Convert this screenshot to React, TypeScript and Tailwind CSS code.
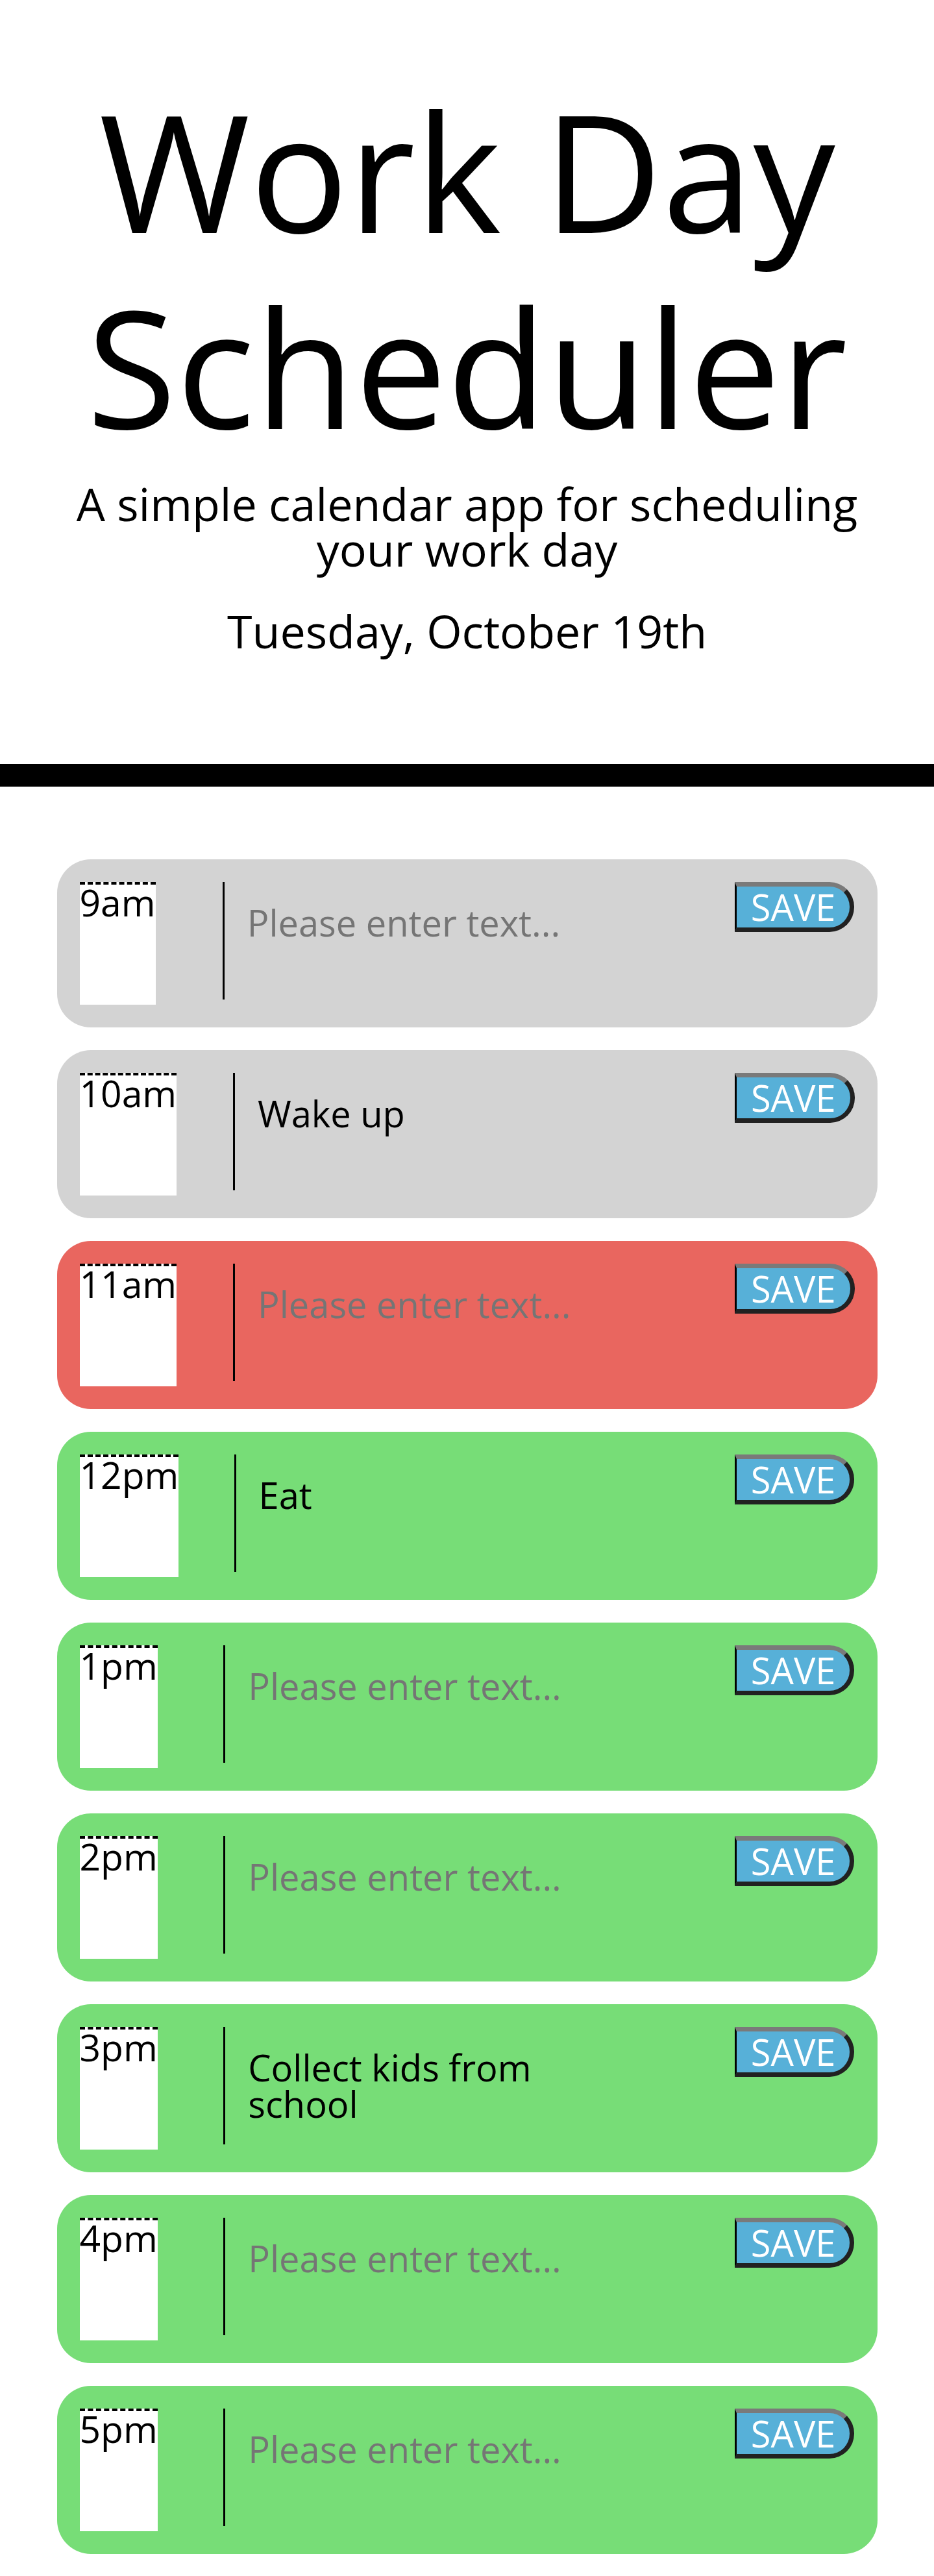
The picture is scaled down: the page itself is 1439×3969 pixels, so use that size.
import React from "react";

type Row = { hour: string; bg: string; value: string };

const rows: Row[] = [
  { hour: "9am", bg: "bg-[#d3d3d3]", value: "" },
  { hour: "10am", bg: "bg-[#d3d3d3]", value: "Wake up" },
  { hour: "11am", bg: "bg-[#e9665f]", value: "" },
  { hour: "12pm", bg: "bg-[#77dd77]", value: "Eat" },
  { hour: "1pm", bg: "bg-[#77dd77]", value: "" },
  { hour: "2pm", bg: "bg-[#77dd77]", value: "" },
  { hour: "3pm", bg: "bg-[#77dd77]", value: "Collect kids from school" },
  { hour: "4pm", bg: "bg-[#77dd77]", value: "" },
  { hour: "5pm", bg: "bg-[#77dd77]", value: "" },
];

function TimeRow({ row }: { row: Row }) {
  return (
    <div
      className={`w-[1264px] rounded-[52px] p-[35px] flex justify-between items-start ${row.bg}`}
    >
      <div className="h-[189px] bg-white border-t-[4px] border-dashed border-black text-[57px] leading-[0.98] text-black">
        {row.hour}
      </div>
      <textarea
        className="w-[686px] h-[181px] border-l-[3px] border-solid border-black bg-transparent pt-[34px] pb-[36px] pl-[35px] pr-[36px] text-[56px] leading-none text-black resize-none overflow-hidden outline-none placeholder:text-[#757575]"
        placeholder="Please enter text..."
        defaultValue={row.value}
      />
      <button className="h-[77px] px-[22px] bg-[#57b0d8] text-white text-[56px] leading-none border-solid border-l-[3px] border-l-black border-t-[7px] border-t-[#7a7a7a] border-r-[7px] border-r-[#212121] border-b-[7px] border-b-[#212121] rounded-r-[38px]">
        SAVE
      </button>
    </div>
  );
}

export default function App() {
  return (
    <div className="font-['Open_Sans',sans-serif] bg-white text-black w-full">
      <header className="pt-[111px] text-center">
        <h1 className="text-[252px] leading-[1.2] font-normal">Work Day Scheduler</h1>
        <p className="mt-[25px] mx-auto max-w-[1300px] text-[70px] leading-none">
          A simple calendar app for scheduling your work day
        </p>
        <p className="mt-[56px] text-[70px] leading-none">Tuesday, October 19th</p>
      </header>
      <div className="mt-[170px] h-[35px] bg-black w-full" />
      <main className="pt-[112px] pb-[35px] flex flex-col items-center gap-[35px]">
        {rows.map((r) => (
          <TimeRow key={r.hour} row={r} />
        ))}
      </main>
    </div>
  );
}
